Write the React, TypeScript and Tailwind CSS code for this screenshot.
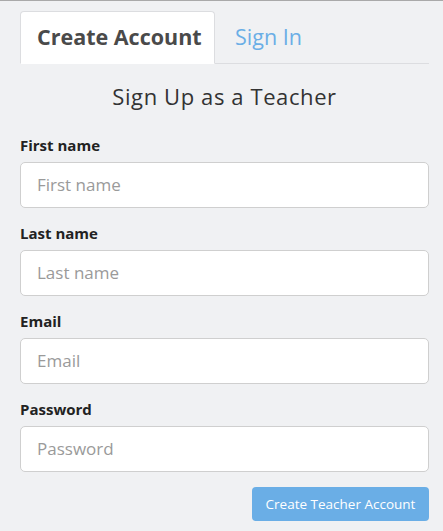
import React from "react";

const fields = [
  { label: "First name", ph: "First name", type: "text" },
  { label: "Last name", ph: "Last name", type: "text" },
  { label: "Email", ph: "Email", type: "email" },
  { label: "Password", ph: "Password", type: "password" },
];

export default function App() {
  return (
    <div
      className="min-h-[531px] w-[443px] bg-[#f0f1f3] border-t border-[#a9a9a9] pl-[20px] pr-[14px] pt-[10px]"
      style={{ fontFamily: "'Open Sans', 'Noto Sans', sans-serif" }}
    >
      <div className="flex items-end border-b border-[#dcdde0] h-[53px]">
        <div className="h-[53px] w-[195px] -mb-px bg-white border border-[#dcdde0] border-b-white rounded-t-[4px] flex items-center pl-[16px] text-[21.5px] font-bold text-[#4a4a4a]">
          Create Account
        </div>
        <div className="h-[52px] flex items-center pl-[20px] text-[21.5px] text-[#6aaee6]">
          Sign In
        </div>
      </div>
      <h1 className="text-center text-[22px] tracking-[0.6px] text-[#333] mt-[17px] leading-[30px]">
        Sign Up as a Teacher
      </h1>
      <form className="mt-[24px] flex flex-col">
        {fields.map((f) => (
          <div key={f.label} className="flex flex-col mb-[15px] last:mb-[14px]">
            <label className="text-[15px] font-bold text-[#222] leading-[20px] mb-[7px]">
              {f.label}
            </label>
            <input
              type={f.type}
              placeholder={f.ph}
              className="h-[46px] w-full bg-white border border-[#cfcfcf] rounded-[5px] px-[16px] pb-[2px] text-[17px] text-[#333] placeholder:text-[#9a9a9a] outline-none"
            />
          </div>
        ))}
        <div className="flex justify-end">
          <button
            type="button"
            className="h-[34px] w-[177px] rounded-[4px] bg-[#6aaee6] text-white text-[13.5px]"
          >
            Create Teacher Account
          </button>
        </div>
      </form>
    </div>
  );
}
